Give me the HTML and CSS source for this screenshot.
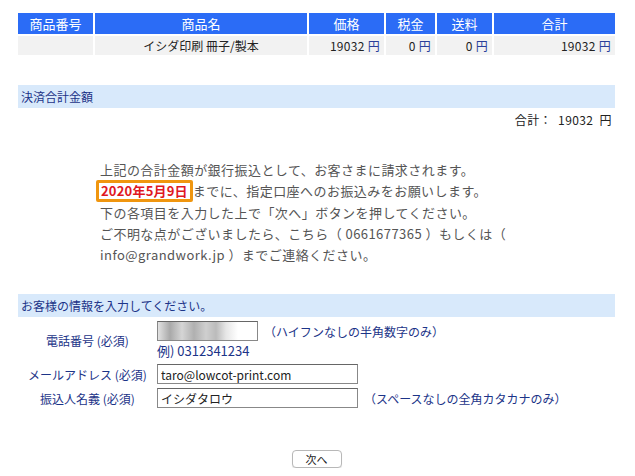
FILE: index.html
```html
<!DOCTYPE html>
<html lang="ja">

<head>
    <meta charset="UTF-8">
    <meta name="viewport" content="width=device-width, initial-scale=1.0">
    <title>決済情報の入力</title>
    <link rel="stylesheet" href="styles.css">
</head>

<body>
    <div class="page">
        <table class="items">
            <thead>
                <tr>
                    <th class="col-no">商品番号</th>
                    <th class="col-name">商品名</th>
                    <th class="col-price">価格</th>
                    <th class="col-tax">税金</th>
                    <th class="col-ship">送料</th>
                    <th class="col-total">合計</th>
                </tr>
            </thead>
            <tbody>
                <tr>
                    <td></td>
                    <td class="center">イシダ印刷 冊子/製本</td>
                    <td class="num">19032 <span class="yen">円</span></td>
                    <td class="num">0 <span class="yen">円</span></td>
                    <td class="num">0 <span class="yen">円</span></td>
                    <td class="num">19032 <span class="yen">円</span></td>
                </tr>
            </tbody>
        </table>

        <h3 class="section-bar sum-bar">決済合計金額</h3>
        <div class="sum-total">合計：&nbsp; 19032&nbsp; 円</div>

        <div class="notice">
            <p>上記の合計金額が銀行振込として、お客さまに請求されます。</p>
            <p><span class="deadline">2020年5月9日</span>までに、指定口座へのお振込みをお願いします。</p>
            <p>下の各項目を入力した上で「次へ」ボタンを押してください。</p>
            <p>ご不明な点がございましたら、こちら（ 0661677365 ）もしくは（</p>
            <p>info@grandwork.jp ）までご連絡ください。</p>
        </div>

        <h3 class="section-bar">お客様の情報を入力してください。</h3>

        <form class="info-form">
            <div class="form-row">
                <label class="form-label" for="tel">電話番号 (必須)</label>
                <div class="form-field">
                    <div class="line">
                        <input type="text" id="tel" class="input-short blurred" value="">
                        <span class="hint">（ハイフンなしの半角数字のみ）</span>
                    </div>
                    <div class="example">例) 0312341234</div>
                </div>
            </div>
            <div class="form-row">
                <label class="form-label" for="mail">メールアドレス (必須)</label>
                <div class="form-field">
                    <input type="text" id="mail" class="input-long" value="taro@lowcot-print.com">
                </div>
            </div>
            <div class="form-row">
                <label class="form-label" for="kana">振込人名義 (必須)</label>
                <div class="form-field">
                    <div class="line">
                        <input type="text" id="kana" class="input-long" value="イシダタロウ">
                        <span class="hint">（スペースなしの全角カタカナのみ）</span>
                    </div>
                </div>
            </div>

            <div class="actions">
                <button type="button" class="next-btn">次へ</button>
            </div>
        </form>
    </div>
</body>

</html>
```

FILE: styles.css
```css
body {
    font-family: 'Noto Sans CJK JP', 'Noto Sans', sans-serif;
    font-size: 12px;
    color: #333;
    margin: 0;
    padding: 0;
    background-color: #fff;
}

.page {
    padding: 12px 20px 0 18px;
}

.items {
    border-collapse: separate;
    border-spacing: 2px;
    margin: -1px -2px 0;
    width: calc(100% + 4px);
}

.items th {
    background-color: #2b6cf6;
    color: #fff;
    font-size: 13px;
    font-weight: normal;
    height: 21px;
    padding: 0;
    line-height: 21px;
}

.items td {
    background-color: #f2f2f2;
    height: 19px;
    padding: 0 4px;
    line-height: 19px;
    color: #222;
}

.col-no { width: 75px; }
.col-name { width: 212px; }
.col-price { width: 75px; }
.col-tax { width: 49px; }
.col-ship { width: 55px; }

.center {
    text-align: center;
}

.num {
    text-align: right;
    letter-spacing: 0.3px;
}

.yen {
    color: #2a3f9a;
}

.section-bar {
    background-color: #d8e9fb;
    color: #1c3488;
    font-size: 12px;
    font-weight: normal;
    margin: 0;
    padding: 0 3px;
    height: 23px;
    line-height: 23px;
}

.sum-bar {
    margin-top: 28px;
}

.sum-total {
    text-align: right;
    padding-right: 3px;
    margin-top: 3px;
    color: #222;
    letter-spacing: 0.4px;
}

.notice {
    margin: 31px 0 0 82px;
    color: #555;
    font-size: 13px;
    letter-spacing: 0.45px;
}

.notice p {
    margin: 0;
    line-height: 21px;
}

.deadline {
    display: inline-block;
    color: #e0181f;
    font-weight: bold;
    letter-spacing: 0.2px;
    border: 3px solid #f0960f;
    border-radius: 2px;
    padding: 0 2px;
    line-height: 16px;
    margin-left: -4px;
}

.notice + .section-bar {
    margin-top: 29px;
}

.info-form {
    margin-top: 4px;
}

.form-row {
    display: flex;
    align-items: center;
    margin-bottom: 4px;
}

.form-label {
    width: 139px;
    text-align: center;
    color: #1c3488;
    font-size: 12px;
}

.form-field {
    display: flex;
    flex-direction: column;
}

.line {
    display: flex;
    align-items: center;
}

input[type="text"] {
    font-family: inherit;
    font-size: 12px;
    color: #222;
    border: 1px solid #888;
    border-top-color: #666;
    padding: 0 3px;
    height: 20px;
    box-sizing: border-box;
    margin: 0;
}

.input-short {
    width: 101px;
}

.input-long {
    width: 201px;
}

.blurred {
    background: linear-gradient(90deg, #e2e2e2 0, #a9a9a9 12px, #d5d5d5 24px, #b0b0b0 36px, #cfcfcf 48px, #bbb 58px, #e6e6e6 68px, #fff 80px);
}

.hint {
    margin-left: 6px;
    color: #1c3488;
}

.example {
    color: #1c3488;
    font-size: 13px;
    margin-top: 1px;
    line-height: 18px;
}

.actions {
    text-align: center;
    margin-top: 42px;
}

.next-btn {
    font-family: inherit;
    font-size: 11px;
    color: #222;
    background-color: #fff;
    border: 1px solid #b8b8b8;
    border-radius: 4px;
    width: 50px;
    height: 18px;
    padding: 0;
    box-shadow: 0 1px 1px rgba(0, 0, 0, 0.1);
}
```
